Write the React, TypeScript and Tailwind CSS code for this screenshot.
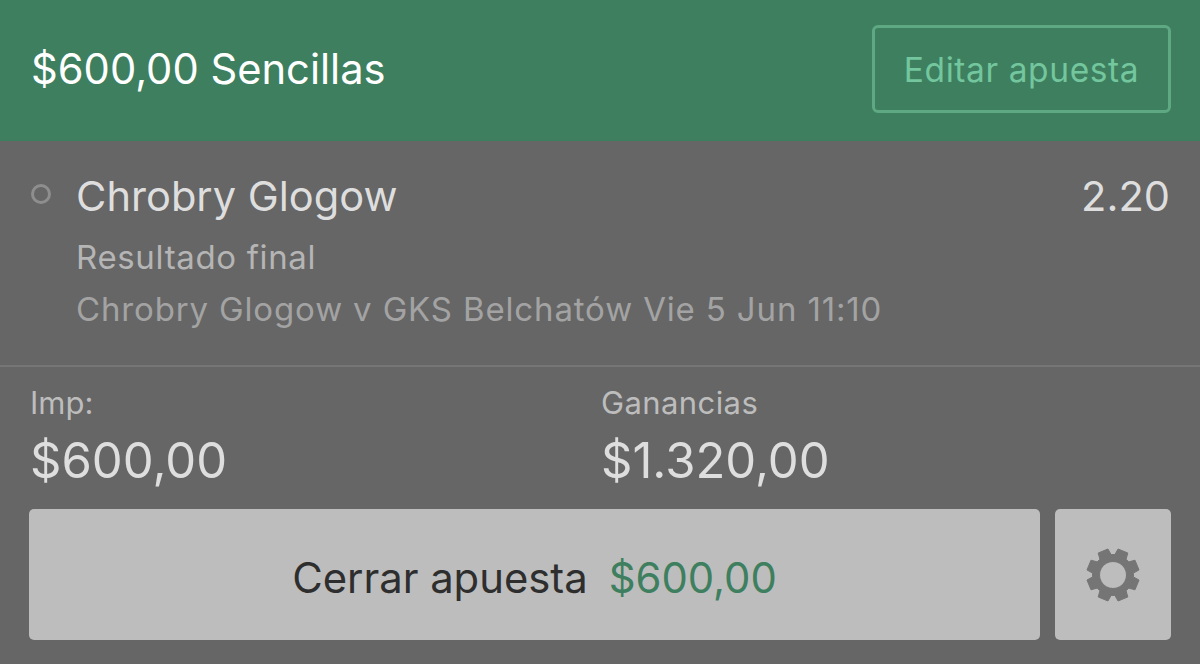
import React from 'react'

// 8 tooth gear, teeth offset by 22.5deg like the reference
const gearPath = () => {
  const pts: string[] = []
  const teeth = 8
  for (let i = 0; i < teeth; i++) {
    const c = (i * 2 * Math.PI) / teeth + Math.PI / 8
    const add = (r: number, a: number) => pts.push(`${(30 + r * Math.cos(c + a)).toFixed(2)} ${(30 + r * Math.sin(c + a)).toFixed(2)}`)
    add(20.5, -0.3)
    add(26.5, -0.2)
    add(26.5, 0.2)
    add(20.5, 0.3)
  }
  return `M${pts.join('L')}Z`
}

const GearIcon = () => (
  <svg width="60" height="60" viewBox="0 0 60 60">
    <path d={gearPath() + ' M30 16.5a13.5 13.5 0 1 0 0.01 0Z'} fill="#757575" fillRule="evenodd" stroke="#757575" strokeWidth="1" strokeLinejoin="round" />
  </svg>
)

export default function App() {
  return (
    <div className="w-[1200px] h-[664px] overflow-hidden bg-[#666666] font-['Inter',sans-serif]">
      <div className="h-[141px] bg-[#3d7f5f] flex items-center justify-between pl-[31px] pr-[29px]">
        <div className="text-[41.7px] text-white leading-none mt-[-1px]">$600,00 Sencillas</div>
        <div className="w-[299px] h-[88px] mt-[-3px] border-[3px] border-[#5ea883] rounded-[6px] flex items-center justify-center text-[33.5px] tracking-[0.6px] text-[#73c69d] pt-[3px]">
          Editar apuesta
        </div>
      </div>

      <div className="h-[226px] border-b-[2px] border-[#767676] pl-[31px] pr-[30px] pt-[32px] flex">
        <div className="w-[20px] h-[20px] mt-[11px] mr-[25px] rounded-full border-[3px] border-[#8e8e8e]" />
        <div className="flex-1">
          <div className="text-[41.6px] leading-[46px] text-[#dedede]">Chrobry Glogow</div>
          <div className="mt-[19px] text-[33px] leading-[38px] tracking-[0.65px] text-[#b5b5b5]">Resultado final</div>
          <div className="mt-[14px] text-[33px] leading-[38px] tracking-[0.85px] text-[#a3a3a3]">Chrobry Glogow v GKS Belchatów Vie 5 Jun 11:10</div>
        </div>
        <div className="text-[41.6px] leading-[46px] text-[#dedede]">2.20</div>
      </div>

      <div className="flex pl-[30px] pt-[18px]">
        <div className="w-[571px]">
          <div className="text-[31px] leading-[36px] text-[#bdbdbd]">Imp:</div>
          <div className="mt-[12px] text-[49px] leading-[56px] text-[#dedede]">$600,00</div>
        </div>
        <div>
          <div className="text-[31px] leading-[36px] tracking-[0.4px] text-[#bdbdbd]">Ganancias</div>
          <div className="mt-[12px] text-[49px] leading-[56px] text-[#dedede]">$1.320,00</div>
        </div>
      </div>

      <div className="flex pl-[29px] pr-[29px] mt-[20px] gap-[15px]">
        <div className="flex-1 h-[131px] bg-[#bdbdbd] rounded-[5px] flex items-center justify-center gap-[21px] text-[41.8px] pt-[8px]">
          <span className="text-[#2e2e2e]">Cerrar apuesta</span>
          <span className="text-[#3d7f5f]">$600,00</span>
        </div>
        <div className="w-[116px] h-[131px] bg-[#bdbdbd] rounded-[5px] flex items-center justify-center">
          <GearIcon />
        </div>
      </div>
    </div>
  )
}
